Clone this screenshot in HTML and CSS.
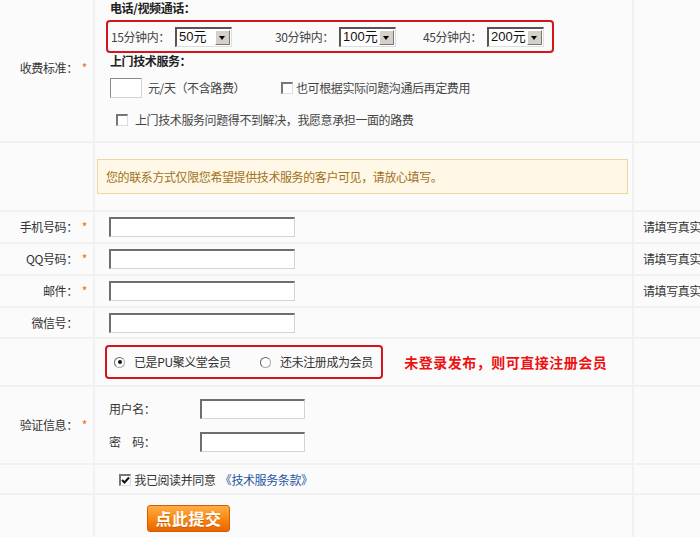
FILE: index.html
```html
<!doctype html>
<html>
<head>
	<title>发布技术服务</title>
	<meta charset="utf-8">
	<link rel="stylesheet" href="styles.css">
</head>

<body>
	<table class="form-table">
		<colgroup>
			<col class="col-label">
			<col class="col-field">
			<col class="col-tip">
		</colgroup>

		<tr class="row-fee">
			<th>收费标准：<em>*</em></th>
			<td class="fee">
				<div class="fee-title">电话/视频通话：</div>
				<div class="fee-box">
					<div class="fee-item">
						<span class="fee-label">15分钟内：</span>
						<span class="select"><span class="select-val">50元</span><i class="select-arrow"></i></span>
					</div>
					<div class="fee-item">
						<span class="fee-label">30分钟内：</span>
						<span class="select"><span class="select-val">100元</span><i class="select-arrow"></i></span>
					</div>
					<div class="fee-item">
						<span class="fee-label">45分钟内：</span>
						<span class="select"><span class="select-val">200元</span><i class="select-arrow"></i></span>
					</div>
				</div>
				<div class="fee-title fee-title-2">上门技术服务：</div>
				<div class="fee-line">
					<span class="text-input text-input-s"></span>
					<span class="fee-unit">元/天（不含路费）</span>
					<span class="check"></span>
					<span class="check-text">也可根据实际问题沟通后再定费用</span>
				</div>
				<div class="fee-line fee-line-2">
					<span class="check"></span>
					<span class="check-text check-text-wide">上门技术服务问题得不到解决，我愿意承担一面的路费</span>
				</div>
			</td>
			<td class="tip"></td>
		</tr>

		<tr class="row-notice">
			<th></th>
			<td class="notice-cell">
				<div class="notice">您的联系方式仅限您希望提供技术服务的客户可见，请放心填写。</div>
			</td>
			<td class="tip"></td>
		</tr>

		<tr class="row-input">
			<th>手机号码：<em>*</em></th>
			<td class="field"><span class="text-input"></span></td>
			<td class="tip">请填写真实的手机号码</td>
		</tr>
		<tr class="row-input">
			<th>QQ号码：<em>*</em></th>
			<td class="field"><span class="text-input"></span></td>
			<td class="tip">请填写真实的QQ号码</td>
		</tr>
		<tr class="row-input">
			<th>邮件：<em>*</em></th>
			<td class="field"><span class="text-input"></span></td>
			<td class="tip">请填写真实的邮箱地址</td>
		</tr>
		<tr class="row-input row-input-last">
			<th>微信号：<em class="hide">*</em></th>
			<td class="field"><span class="text-input"></span></td>
			<td class="tip"></td>
		</tr>

		<tr class="row-member">
			<th></th>
			<td class="member-cell">
				<div class="member-box">
					<span class="radio radio-on"></span>
					<span class="radio-text">已是PU聚义堂会员</span>
					<span class="radio"></span>
					<span class="radio-text">还未注册成为会员</span>
				</div>
				<span class="member-hint">未登录发布，则可直接注册会员</span>
			</td>
			<td class="tip"></td>
		</tr>

		<tr class="row-login">
			<th>验证信息：<em>*</em></th>
			<td class="field">
				<div class="login-line">
					<span class="login-label">用户名：</span>
					<span class="text-input text-input-m"></span>
				</div>
				<div class="login-line">
					<span class="login-label">密　码：</span>
					<span class="text-input text-input-m"></span>
				</div>
			</td>
			<td class="tip"></td>
		</tr>

		<tr class="row-agree">
			<th></th>
			<td class="agree-cell">
				<span class="check check-on">
					<svg width="9" height="9" viewBox="0 0 9 9"><path d="M1 4 L3.5 6.5 L8 1.5" fill="none" stroke="#111" stroke-width="2"/></svg>
				</span>
				<span class="agree-text">我已阅读并同意</span>
				<a href="javascript:void(0)" class="agree-link">《技术服务条款》</a>
			</td>
			<td class="tip"></td>
		</tr>

		<tr class="row-submit">
			<th></th>
			<td class="submit-cell">
				<a href="javascript:void(0)" class="btn-submit">点此提交</a>
			</td>
			<td class="tip"></td>
		</tr>
	</table>
</body>
</html>
```

FILE: styles.css
```css
html, body {
	margin: 0;
	padding: 0;
	overflow: hidden;
	background: #fff;
}
body {
	font-family: "Noto Sans CJK SC", "Liberation Sans", sans-serif;
	font-size: 12px;
	line-height: 16px;
	color: #333;
	letter-spacing: -0.4px;
}

.form-table {
	table-layout: fixed;
	border-collapse: separate;
	border-spacing: 2px;
	width: 778px;
	margin: -8px 0 0 -2px;
	background: #f1f1f1;
}
.col-label {
	width: 93px;
}
.col-field {
	width: 537px;
}
.col-tip {
	width: 140px;
}
.form-table th,
.form-table td {
	padding: 0;
	background: #fbfbfb;
	vertical-align: middle;
}
.form-table th {
	font-weight: normal;
	text-align: right;
	padding-right: 6px;
	white-space: nowrap;
}
.form-table th em {
	font-style: normal;
	color: #f26a10;
	margin-left: 4px;
}
.form-table th em.hide {
	visibility: hidden;
}
.tip {
	padding-left: 9px !important;
	white-space: nowrap;
	overflow: hidden;
}

/* row heights */
.row-fee td, .row-fee th {
	height: 147px;
}
.row-notice td, .row-notice th {
	height: 67px;
}
.row-input td, .row-input th {
	height: 30px;
}
.row-input-last td, .row-input-last th {
	height: 29px;
}
.row-member td, .row-member th {
	height: 46px;
}
.row-login td, .row-login th {
	height: 76px;
}
.row-agree td, .row-agree th {
	height: 28px;
}
.row-submit td, .row-submit th {
	height: 48px;
}

/* fee */
.form-table td.fee {
	vertical-align: top;
	padding-left: 15px;
}
.fee-title {
	font-weight: bold;
	padding-top: 6px;
	color: #222;
}
.fee-title-2 {
	padding-top: 0;
}
.fee-box {
	display: flex;
	align-items: center;
	box-sizing: border-box;
	width: 448px;
	height: 33px;
	margin: 4px 0 0 -4px;
	padding-left: 3px;
	border: 2px solid #d5141c;
	border-radius: 4px;
}
.fee-item {
	display: flex;
	align-items: center;
	flex-shrink: 0;
	width: 148px;
}
.fee-item:first-child {
	width: 164px;
}
.fee-item:last-child {
	width: auto;
}
.fee-label {
	width: 64px;
	color: #444;
}
.select {
	display: flex;
	align-items: center;
	justify-content: space-between;
	box-sizing: border-box;
	width: 57px;
	height: 20px;
	padding: 1px;
	background: #fff;
	border-top: 2px solid #555;
	border-left: 2px solid #555;
	border-right: 1px solid #ddd;
	border-bottom: 1px solid #ddd;
	font-family: "Liberation Sans", "Noto Sans CJK SC", sans-serif;
	font-size: 13px;
	letter-spacing: 0;
	color: #111;
}
.select-val {
	padding-left: 1px;
}
.select-arrow {
	position: relative;
	box-sizing: border-box;
	width: 15px;
	height: 15px;
	background: #d4d0c8;
	border-top: 1px solid #fff;
	border-left: 1px solid #fff;
	border-right: 1px solid #777;
	border-bottom: 1px solid #777;
}
.select-arrow::after {
	content: '';
	position: absolute;
	left: 3px;
	top: 5px;
	border-left: 3.5px solid transparent;
	border-right: 3.5px solid transparent;
	border-top: 4px solid #000;
}
.fee-line {
	display: flex;
	align-items: center;
	margin-top: 9px;
}
.fee-line-2 {
	margin-top: 14px;
	padding-left: 6px;
}
.fee-unit {
	width: 133px;
	margin-left: 6px;
	color: #444;
}

/* inputs */
.text-input {
	display: inline-block;
	vertical-align: middle;
	box-sizing: border-box;
	width: 186px;
	height: 20px;
	background: #fff;
	border-top: 2px solid #6e6e6e;
	border-left: 2px solid #6e6e6e;
	border-right: 1px solid #d4d4d4;
	border-bottom: 1px solid #d4d4d4;
}
.text-input-s {
	width: 32px;
	border-top: 1px solid #8a8a8a;
	border-left: 1px solid #8a8a8a;
}
.text-input-m {
	width: 105px;
}
.form-table td.field {
	padding-left: 14px;
}

.check {
	display: inline-flex;
	align-items: center;
	justify-content: center;
	box-sizing: border-box;
	width: 12px;
	height: 12px;
	background: #fff;
	border-top: 2px solid #777;
	border-left: 2px solid #777;
	border-right: 1px solid #ddd;
	border-bottom: 1px solid #ddd;
}
.check-text {
	margin-left: 3px;
	color: #444;
}
.check-text-wide {
	margin-left: 7px;
}

/* notice */
.form-table td.notice-cell {
	padding: 0 4px 0 2px;
}
.notice {
	display: flex;
	align-items: center;
	box-sizing: border-box;
	height: 35px;
	padding-left: 8px;
	background: #fff8e6;
	border: 1px solid #f2d69e;
	color: #a0701c;
}

/* member */
.form-table td.member-cell {
	padding-left: 10px;
}
.member-cell {
	white-space: nowrap;
}
.member-box {
	display: inline-flex;
	align-items: center;
	vertical-align: middle;
	box-sizing: border-box;
	width: 278px;
	height: 34px;
	padding-left: 7px;
	border: 2px solid #d5141c;
	border-radius: 4px;
}
.radio {
	position: relative;
	flex-shrink: 0;
	box-sizing: border-box;
	width: 11px;
	height: 11px;
	border-radius: 50%;
	background: #fff;
	border: 1px solid #aaa;
	border-top-color: #666;
	border-left-color: #666;
}
.radio-on::after {
	content: '';
	position: absolute;
	left: 2.5px;
	top: 2.5px;
	width: 4px;
	height: 4px;
	border-radius: 50%;
	background: #111;
}
.radio-text {
	flex-shrink: 0;
	margin-left: 9px;
	width: 126px;
	color: #333;
}
.member-hint {
	display: inline-block;
	vertical-align: middle;
	margin-left: 19px;
	font-size: 14px;
	font-weight: bold;
	letter-spacing: 0.5px;
	color: #ee1111;
}

/* login */
.login-line {
	display: flex;
	align-items: center;
}
.login-line + .login-line {
	margin-top: 13px;
}
.login-label {
	width: 91px;
}

/* agree */
.form-table td.agree-cell {
	padding-left: 24px;
}
.agree-cell .check {
	vertical-align: middle;
}
.agree-text {
	vertical-align: middle;
	margin-left: 1px;
	color: #333;
}
.agree-link {
	vertical-align: middle;
	margin-left: 2px;
	color: #1d57a3;
	text-decoration: none;
}

/* submit */
.form-table td.submit-cell {
	vertical-align: top;
	padding: 10px 0 0 52px;
}
.btn-submit {
	display: inline-block;
	box-sizing: border-box;
	width: 83px;
	height: 27px;
	line-height: 25px;
	text-align: center;
	font-size: 16px;
	font-weight: bold;
	letter-spacing: 0.5px;
	color: #fff;
	text-decoration: none;
	border: 1px solid #d85c00;
	border-radius: 3px;
	background: linear-gradient(#ffad45, #f78510 55%, #e86400);
	text-shadow: 0 1px 0 rgba(150, 60, 0, .4);
}
```
